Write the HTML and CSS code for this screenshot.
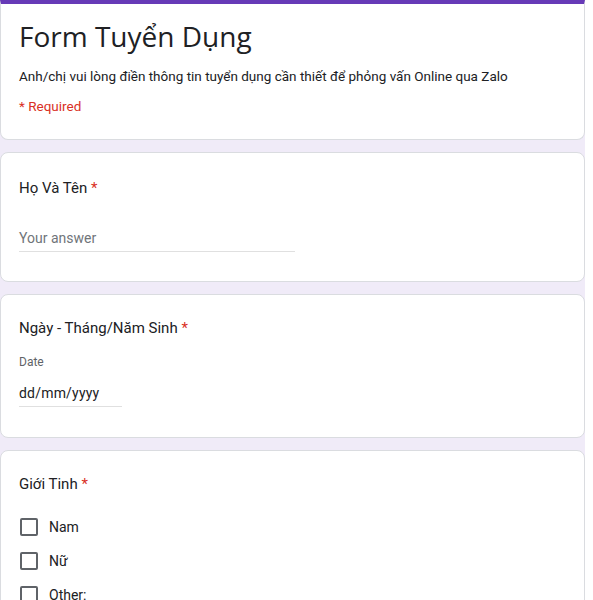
FILE: index.html
```html
<!DOCTYPE html>
<html lang="vi">
<head>
<meta charset="utf-8">
<link rel="stylesheet" href="styles.css">
</head>
<body>
<div class="form">
  <section class="card header-card">
    <h1 class="title">Form Tuyển Dụng</h1>
    <p class="desc">Anh/chị vui lòng điền thông tin tuyển dụng cần thiết để phỏng vấn Online qua Zalo</p>
    <p class="required">* Required</p>
  </section>

  <section class="card question q-text">
    <div class="label">Họ Và Tên <span class="star">*</span></div>
    <div class="text-input wide">Your answer</div>
  </section>

  <section class="card question q-date">
    <div class="label">Ngày - Tháng/Năm Sinh <span class="star">*</span></div>
    <div class="date-block">
      <div class="date-caption">Date</div>
      <div class="date-input">dd/mm/yyyy</div>
    </div>
  </section>

  <section class="card question q-check">
    <div class="label">Giới Tinh <span class="star">*</span></div>
    <div class="options">
      <div class="option"><span class="box"></span><span>Nam</span></div>
      <div class="option"><span class="box"></span><span>Nữ</span></div>
      <div class="option"><span class="box"></span><span>Other:</span></div>
    </div>
  </section>
</div>
</body>
</html>
```

FILE: styles.css
```css
html, body {
  margin: 0;
  padding: 0;
  background: #fff;
}
body {
  font-family: Roboto, "Liberation Sans", Arial, sans-serif;
  color: #202124;
  height: 600px;
  overflow: hidden;
}
.form {
  width: 585px;
  background: #f0ebf8;
  display: flex;
  flex-direction: column;
  gap: 12px;
  min-height: 600px;
}
.card {
  background: #fff;
  border: 1px solid #dadce0;
  border-radius: 8px;
  box-sizing: border-box;
  padding: 0 18px;
}
.header-card {
  border-top: 4px solid #673ab7;
  border-radius: 0 0 8px 8px;
  height: 140px;
  padding-top: 15px;
}
.title {
  margin: 0;
  font-family: "Open Sans", Roboto, sans-serif;
  font-weight: 400;
  font-size: 28px;
  line-height: 34px;
  color: #202124;
}
.desc {
  margin: 13px 0 0;
  font-size: 13.5px;
  line-height: 20px;
  color: #202124;
}
.required {
  margin: 10px 0 0;
  font-size: 13.5px;
  line-height: 20px;
  color: #d93025;
}
.question {
  padding-top: 24px;
  padding-bottom: 24px;
}
.q-text {
  height: 130px;
}
.q-date {
  height: 144px;
  padding-top: 22px;
}
.label {
  font-size: 15px;
  line-height: 22px;
  color: #202124;
}
.star {
  color: #d93025;
}
.text-input {
  margin-top: 29px;
  font-size: 14px;
  line-height: 20px;
  color: #70757a;
  border-bottom: 1px solid #e0e0e0;
  padding-bottom: 3px;
}
.text-input.wide {
  width: 276px;
}
.date-block {
  margin-top: 15px;
}
.date-caption {
  font-size: 12px;
  line-height: 16px;
  color: #5f6368;
}
.date-input {
  margin-top: 13px;
  width: 103px;
  font-size: 14px;
  line-height: 20px;
  color: #202124;
  border-bottom: 1px solid #e0e0e0;
  padding-bottom: 3px;
  letter-spacing: 0.2px;
}
.q-check {
  padding-top: 22px;
}
.options {
  margin-top: 22px;
  display: flex;
  flex-direction: column;
  gap: 14px;
}
.option {
  display: flex;
  align-items: center;
  gap: 11px;
  font-size: 14px;
  line-height: 20px;
  color: #202124;
}
.box {
  width: 14px;
  height: 14px;
  border: 2px solid #5f6368;
  border-radius: 2px;
  margin-left: 1px;
}
```
